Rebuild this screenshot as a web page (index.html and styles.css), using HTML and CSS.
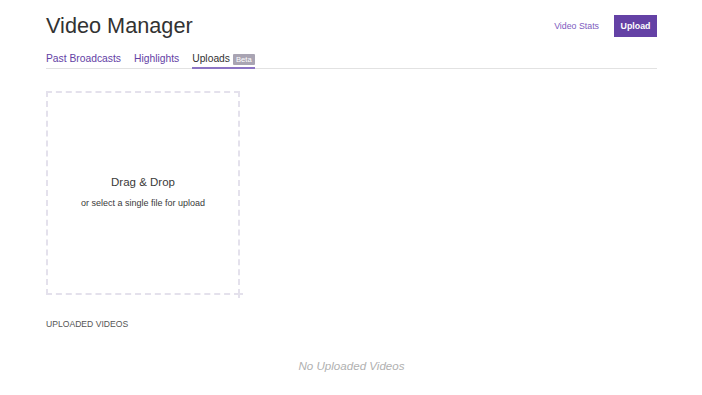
FILE: index.html
```html
<!DOCTYPE html>
<html>
<head>
<meta charset="utf-8">
<link rel="stylesheet" href="styles.css">
</head>
<body>
<div class="page">
  <div class="header">
    <h1 class="title">Video Manager</h1>
    <div class="actions">
      <a class="stats-link">Video Stats</a>
      <button class="upload-btn">Upload</button>
    </div>
  </div>
  <div class="tabs">
    <a class="tab">Past Broadcasts</a>
    <a class="tab">Highlights</a>
    <a class="tab active">Uploads <span class="badge">Beta</span></a>
  </div>
  <div class="dropzone">
    <div class="drop-title">Drag &amp; Drop</div>
    <div class="drop-sub">or select a single file for upload</div>
  </div>
  <div class="section-title">UPLOADED VIDEOS</div>
  <div class="empty">No Uploaded Videos</div>
</div>
</body>
</html>
```
FILE: styles.css
```css
html, body {
  margin: 0;
  padding: 0;
  background: #ffffff;
  font-family: "Liberation Sans", Arial, sans-serif;
}
body {
  padding-left: 1px;
}
.page {
  width: 611px;
  margin: 0 auto;
}
.header {
  display: flex;
  justify-content: space-between;
  align-items: center;
  padding-top: 13px;
}
.title {
  margin: 0;
  font-size: 21.7px;
  line-height: 25px;
  font-weight: normal;
  color: #323232;
}
.actions {
  display: flex;
  align-items: center;
  gap: 15px;
}
.stats-link {
  font-size: 8.8px;
  color: #7d5bbe;
}
.upload-btn {
  border: none;
  background: #6441a5;
  color: #ffffff;
  font-family: "Liberation Sans", Arial, sans-serif;
  font-size: 8.8px;
  font-weight: bold;
  width: 43px;
  height: 22px;
  padding: 0;
}
.tabs {
  display: flex;
  gap: 13px;
  margin-top: 14px;
  border-bottom: 1px solid #e2e2e2;
}
.tab {
  font-size: 10.3px;
  line-height: 14px;
  color: #6441a5;
  padding-bottom: 1px;
  border-bottom: 2px solid transparent;
  margin-bottom: -1px;
  display: flex;
  align-items: center;
}
.tab.active {
  color: #323232;
  border-bottom-color: #8c74c4;
}
.badge {
  display: inline-block;
  background: #a9a4b3;
  color: #ffffff;
  font-size: 7.6px;
  line-height: 11px;
  padding: 0 3px;
  border-radius: 1px;
  margin-left: 3px;
}
.dropzone {
  position: relative;
  box-sizing: border-box;
  width: 194px;
  height: 204px;
  margin-top: 22px;
  padding-bottom: 3px;
  border: 2px dashed #e4e1ec;
  display: flex;
  flex-direction: column;
  align-items: center;
  justify-content: center;
}
.dropzone::after {
  content: "";
  position: absolute;
  right: -5px;
  bottom: -2px;
  width: 5px;
  height: 2px;
  background: #e4e1ec;
}
.dropzone::before {
  content: "";
  position: absolute;
  right: -2px;
  bottom: -5px;
  width: 2px;
  height: 5px;
  background: #e4e1ec;
}
.drop-title {
  font-size: 11.5px;
  line-height: 14px;
  color: #3a3a3a;
}
.drop-sub {
  font-size: 9px;
  line-height: 11px;
  color: #3a3a3a;
  margin-top: 9px;
}
.section-title {
  font-size: 8.6px;
  line-height: 11px;
  color: #555555;
  margin-top: 24px;
}
.empty {
  text-align: center;
  font-size: 11.6px;
  line-height: 14px;
  font-style: italic;
  color: #b0b0b0;
  margin-top: 29px;
}
```
